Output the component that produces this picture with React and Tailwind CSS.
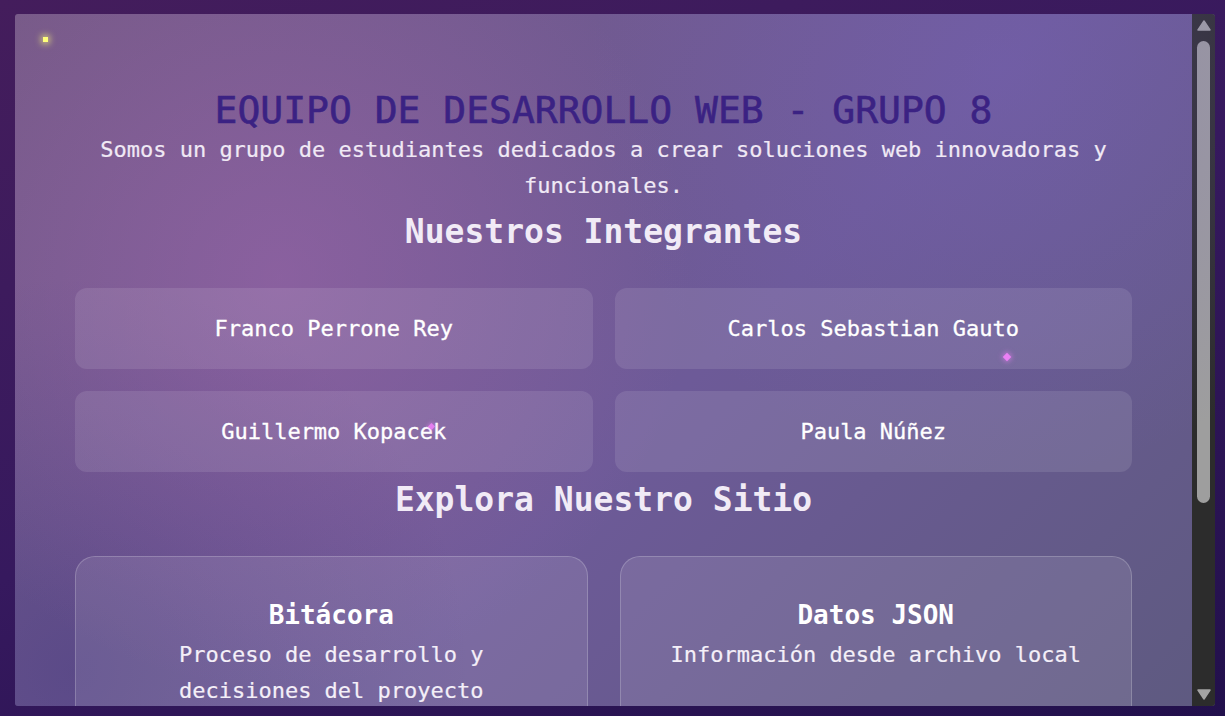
import React from 'react';

const integrantes = ['Franco Perrone Rey', 'Carlos Sebastian Gauto', 'Guillermo Kopacek', 'Paula Núñez'];

const secciones = [
    { titulo: 'Bitácora', texto: 'Proceso de desarrollo y decisiones del proyecto' },
    { titulo: 'Datos JSON', texto: 'Información desde archivo local' },
    { titulo: 'Galería', texto: 'Imágenes y recursos del equipo' },
    { titulo: 'Contacto', texto: 'Comunicate con nosotros' },
];

const ScrollBar = () => (
    <div className="w-[23px] shrink-0 bg-[#2c2c2c] flex flex-col items-center pt-[6px] pb-[6px]">
        <svg width="14" height="11" viewBox="0 0 14 11">
            <path d="M7 1 L13 10 L1 10 Z" fill="#a3a3a3" stroke="#a3a3a3" strokeWidth="1.5" strokeLinejoin="round" />
        </svg>
        <div className="w-[13px] h-[462px] mt-[10px] rounded-full bg-[#9e9e9e]" />
        <div className="flex-1" />
        <svg width="14" height="11" viewBox="0 0 14 11">
            <path d="M1 1 L13 1 L7 10 Z" fill="#a3a3a3" stroke="#a3a3a3" strokeWidth="1.5" strokeLinejoin="round" />
        </svg>
    </div>
);

const App = () => {
    return (
        <div
            className="h-screen w-full overflow-hidden pt-[14px] pl-[15px] pr-[10px] pb-[10px] bg-[linear-gradient(160deg,#441d5c_0%,#36195e_50%,#22104c_100%)]"
            style={{ fontFamily: '"DejaVu Sans Mono", "Liberation Mono", monospace' }}
        >
            <div className="h-full flex rounded-[3px] overflow-hidden bg-[linear-gradient(135deg,#765a87_0%,#6d5a98_55%,#5e5a80_100%)] relative">
                {/* glow blobs */}
                <div className="absolute inset-0 pointer-events-none bg-[radial-gradient(circle_at_22%_38%,rgba(168,104,178,0.45)_0%,rgba(168,104,178,0)_40%),radial-gradient(circle_at_82%_8%,rgba(120,100,190,0.35)_0%,rgba(120,100,190,0)_35%),radial-gradient(circle_at_5%_95%,rgba(60,50,120,0.4)_0%,rgba(60,50,120,0)_30%)]" />

                {/* particles */}
                <div className="absolute left-[28px] top-[23px] w-[5px] h-[5px] bg-[#ffff7a] shadow-[0_0_6px_2px_rgba(255,255,120,0.6)]" />
                <div className="absolute left-[989px] top-[340px] w-[6px] h-[6px] rotate-45 bg-[#ec80f5] shadow-[0_0_5px_1px_rgba(236,128,245,0.6)] z-10" />
                <div className="absolute left-[414px] top-[410px] w-[5px] h-[5px] rotate-45 bg-[#e47ef0] shadow-[0_0_4px_1px_rgba(228,126,240,0.5)] z-10" />

                {/* Main content */}
                <div className="relative flex-1 overflow-hidden px-[60px] pt-[74px] text-center">
                    <h1 className="text-[38px] leading-[44px] text-[#3b2283] [-webkit-text-stroke:0.6px_#3b2283]">
                        EQUIPO DE DESARROLLO WEB - GRUPO 8
                    </h1>
                    <p className="text-[22px] leading-[36px] text-[#f0e9f5] [-webkit-text-stroke:0.2px_#f0e9f5]">
                        Somos un grupo de estudiantes dedicados a crear soluciones web innovadoras y funcionales.
                    </p>

                    <h2 className="mt-[3px] mb-[31px] text-[33px] leading-[50px] font-bold text-[#f1ebf6]">
                        Nuestros Integrantes
                    </h2>
                    <div className="grid grid-cols-2 gap-[22px]">
                        {integrantes.map((nombre) => (
                            <div key={nombre} className="rounded-xl bg-white/10 py-6 text-[22px] leading-[33px] text-white [-webkit-text-stroke:0.3px_#ffffff]">
                                {nombre}
                            </div>
                        ))}
                    </div>

                    <h2 className="mt-[3px] mb-[31px] text-[33px] leading-[50px] font-bold text-[#f1ebf6]">
                        Explora Nuestro Sitio
                    </h2>
                    <div className="grid grid-cols-2 gap-8">
                        {secciones.map((s) => (
                            <div key={s.titulo} className="rounded-[20px] border border-white/20 bg-white/10 p-10">
                                <h3 className="text-[26px] leading-[36px] font-bold text-white">{s.titulo}</h3>
                                <p className="mt-[4px] text-[22px] leading-[36px] text-[#f4eff8] [-webkit-text-stroke:0.2px_#f4eff8]">{s.texto}</p>
                            </div>
                        ))}
                    </div>
                </div>

                <ScrollBar />
            </div>
        </div>
    );
};

export default App;
